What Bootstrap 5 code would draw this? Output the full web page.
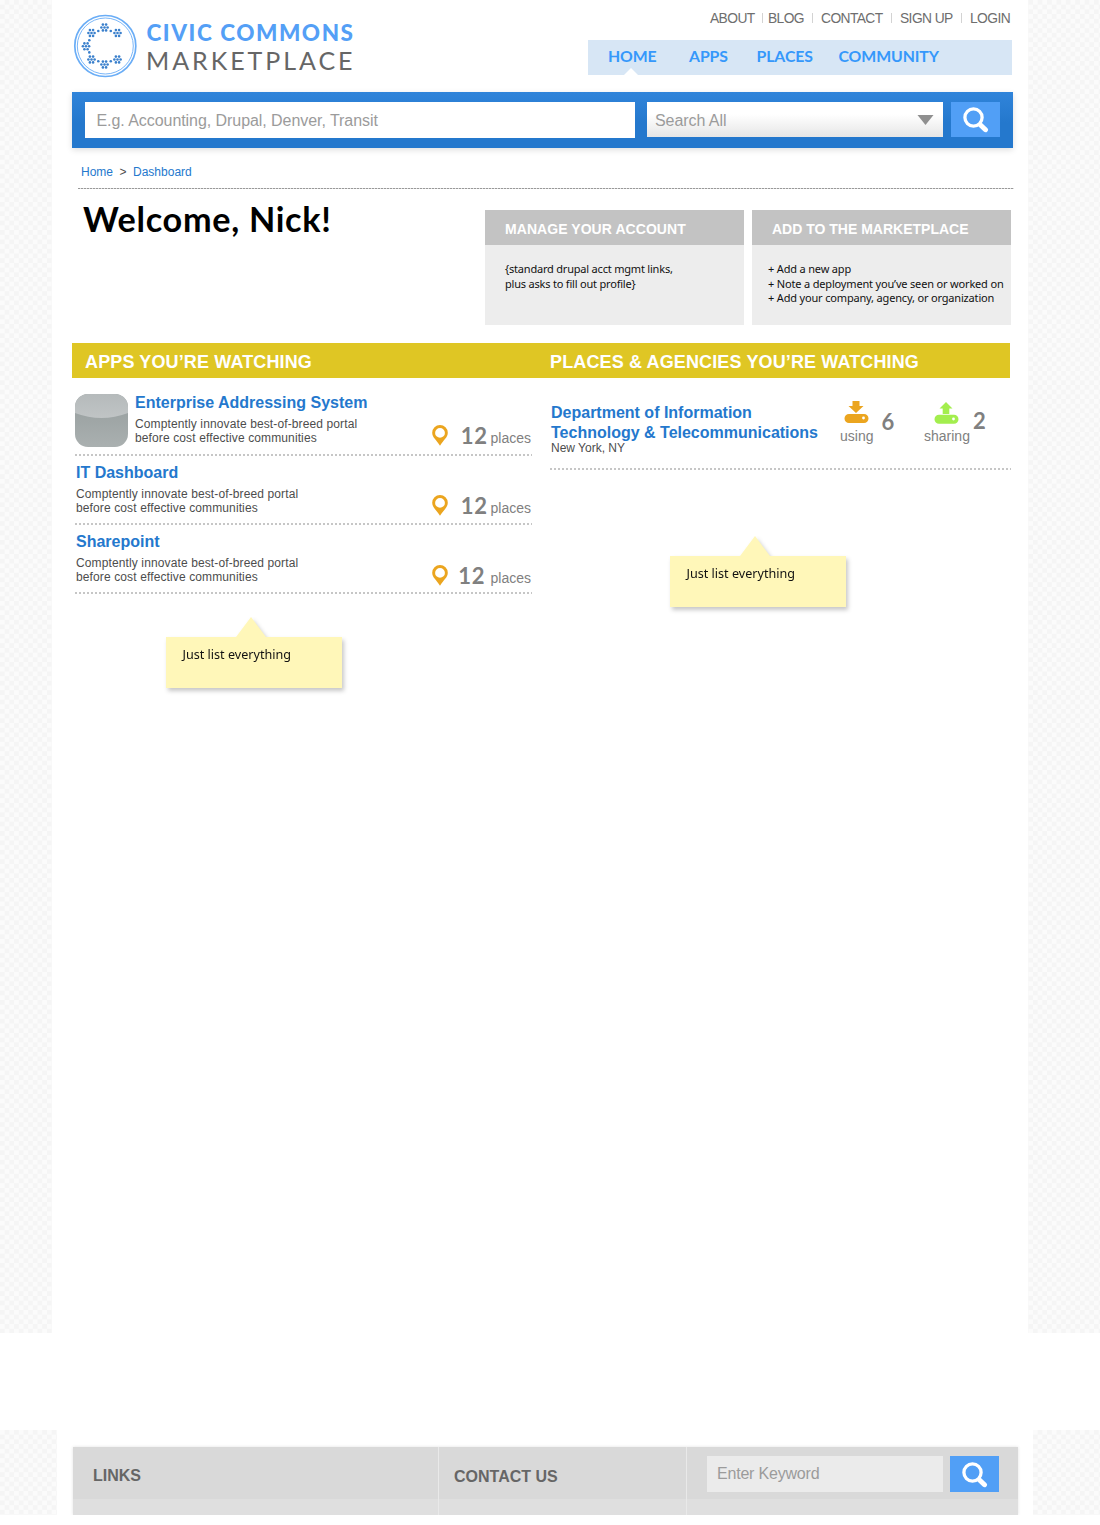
<!DOCTYPE html>
<html lang="en">
<head>
<meta charset="utf-8">
<meta name="viewport" content="width=device-width, initial-scale=1">
<title>Civic Commons Marketplace</title>
<link href="https://cdn.jsdelivr.net/npm/bootstrap@5.3.0/dist/css/bootstrap.min.css" rel="stylesheet">
<style>
  body { font-family: "Liberation Sans", Arial, sans-serif; font-size: 12px; color: #4d4d4d; background: #fff; width: 1100px; }
  a { text-decoration: none; }
  .checker { background: repeating-conic-gradient(#f5f5f5 0 25%, #fbfbfb 0 50%) 0 0 / 9.4px 9.4px; }
  .sheet { width: 976px; height: 1333px; margin-left: 52px; background: #fff; padding-left: 20px; }
  .inner { width: 940px; }
  .masthead { height: 92px; }
  .top-links { height: 40px; padding: 10px 0 0 122px; font-size: 13.8px; line-height: 17px; letter-spacing: -.58px; }
  .top-links a { color: #6e6e6e; white-space: nowrap; }
  .top-links a + a::before { content: ""; display: inline-block; width: 1px; height: 10px; background: #d3d3d3; margin-right: var(--gap, 8px); }
  .main-nav { width: 424px; height: 34.5px; background: #d7e6f5; font: 700 15.8px/32px Lato, sans-serif; letter-spacing: -.08px; padding-left: 20px; }
  .main-nav a { color: #3598fb; }
  .main-nav .active::after { content: ""; position: absolute; left: 16px; bottom: 0; border: 7px solid transparent; border-top: 0; border-bottom-color: #fff; }
  .search-bar { width: 940.5px; height: 56px; padding: 9.5px 0 0 12.5px; background: linear-gradient(#3084da, #2478cd 55%); box-shadow: 0 2px 6px rgba(0,0,0,.13); }
  .field { font-size: 16px; letter-spacing: -.06px; color: #9b9b9b; line-height: 37px; white-space: nowrap; }
  .field-main { width: 550px; height: 36.5px; background: #fff; padding-left: 12px; }
  .field-select { width: 296px; height: 35.5px; margin-left: 12.5px; padding: 2px 9px 0 8px; background: linear-gradient(#fff 35%, #e6e6e6); }
  .go { width: 49px; height: 35.5px; padding-top: 2px; background: #519ff6; }
  .crumbs { height: 40px; padding: 15px 0 0 9px; line-height: 18px; }
  .crumbs a, .entry a { color: #2478cd; }
  .rule-fine { height: 1px; width: 936px; margin-left: 6px; background: repeating-linear-gradient(90deg, #999 0 2px, #dedede 2px 3px); }
  .welcome { font: 700 34.2px/44px Lato, sans-serif; color: #000; margin: 8px 0 0 11px; letter-spacing: .7px; white-space: nowrap; }
  .panel { width: 259px; height: 115px; background: #ededed; }
  .panel h2 { height: 35px; margin: 0; padding: 2px 0 0 20px; background: #c3c3c3; color: #fff; font-size: 14px; font-weight: 700; line-height: 35px; letter-spacing: .06px; }
  .hand { font-family: "Noto Sans", sans-serif; color: #111; }
  .panel .hand { font-size: 11px; line-height: 14.5px; letter-spacing: -.17px; padding: 17px 0 0 20px; margin: 0; white-space: nowrap; }
  .gold { width: 938px; height: 35px; background: #dfc624; color: #fff; }
  .gold h2 { font-size: 18px; font-weight: 700; line-height: 38px; margin: 0; letter-spacing: .13px; }
  .dots { height: 2px; background: repeating-linear-gradient(90deg, #c6c6c6 0 2px, #fff 2px 4px); }
  .entry h3 { font-size: 16px; font-weight: 700; line-height: 20px; margin: 0; white-space: nowrap; }
  .entry p { line-height: 14.5px; letter-spacing: .12px; margin: 4px 0 0; white-space: nowrap; }
  .entry { height: 67px; padding-top: 6.5px; }
  .entry-first { height: 76px; padding-top: 14.5px; }
  .count { font: 700 22px/22px Lato, sans-serif; color: #808080; letter-spacing: .6px; }
  .places-count { line-height: 20px; }
  .unit { font-size: 14px; line-height: 16px; color: #808080; }
  .sticky-tip { width: 176px; height: 51px; background: #fff7b9; font-size: 12.6px; line-height: 18px; padding: 9px 0 0 16.5px; filter: drop-shadow(2px 3px 2px rgba(0,0,0,.22)); }
  .sticky-tip::before { content: ""; position: absolute; left: 69.5px; top: -20px; border: 15.5px solid transparent; border-top: 0; border-bottom: 20.5px solid #fff7b9; }
  .foot-zone { height: 85px; margin-top: 97px; padding-left: 57px; }
  .foot-sheet { width: 976px; height: 85px; background: #fff; padding: 17px 0 0 16px; }
  .foot { width: 945px; height: 68px; background: linear-gradient(#d9d9d9 52px, #dfdfdf 52px); box-shadow: 0 0 3px rgba(0,0,0,.12); }
  .foot h2 { font-size: 16px; font-weight: 700; color: #666; line-height: 20px; margin: 0; }
  .foot-col + .foot-col { border-left: 1px solid #e9e9e9; }
  .field-foot { width: 236px; height: 36px; background: #ebebeb; padding-left: 10px; letter-spacing: -.2px; line-height: 36px; }
</style>
</head>
<body>
<svg width="0" height="0" class="position-absolute">
  <defs>
    <symbol id="glass" viewBox="0 0 26 26"><circle cx="10.5" cy="10.5" r="8.6" fill="none" stroke="#fff" stroke-width="3.3"/><path d="M17.5 18l5 4.700" stroke="#fff" stroke-width="5" stroke-linecap="round"/></symbol>
    <symbol id="pin" viewBox="0 0 16 21"><path fill="#eba51f" fill-rule="evenodd" d="M8 0a7.800 7.800 0 0 1 7.800 7.800C15.800 12.500 11.500 15 8 20.800 4.500 15 .2 12.500 .2 7.800A7.800 7.800 0 0 1 8 0zM8 3a4.900 4.900 0 1 0 0 9.800A4.900 4.900 0 0 0 8 3z"/></symbol>
    <g id="cluster"><circle r="1.300"/><circle cx="3.100" r="1.300"/><circle cx="-3.100" r="1.300"/><circle cx="1.600" cy="2.900" r="1.300"/><circle cx="-1.600" cy="2.900" r="1.300"/><circle cx="1.600" cy="-2.900" r="1.300"/><circle cx="-1.600" cy="-2.900" r="1.300"/></g>
  </defs>
</svg>

<div class="checker">
  <div class="sheet">
    <div class="inner">
      <header class="masthead d-flex justify-content-between">
        <svg width="290" height="90" viewBox="72 0 290 90" role="img" aria-label="Civic Commons Marketplace">
          <g fill="none" stroke="#6aadf6"><circle cx="105.300" cy="46" r="30.500" stroke-width="1.700"/><circle cx="105.300" cy="46" r="28" stroke-width=".9"/></g>
          <g fill="#3b80cc">
            <use href="#cluster" x="104.500" y="27.500"/><use href="#cluster" x="91.500" y="33" /><use href="#cluster" x="117.500" y="33"/>
            <use href="#cluster" x="86" y="46.300"/><use href="#cluster" x="91.500" y="59.500"/><use href="#cluster" x="117.500" y="59.500"/><use href="#cluster" x="104.500" y="64.500"/>
            <circle cx="98.300" cy="31" r="1.300"/><circle cx="110.800" cy="31" r="1.300"/><circle cx="89.300" cy="40.200" r="1.300"/><circle cx="89.300" cy="52.400" r="1.300"/><circle cx="98.300" cy="61.300" r="1.300"/><circle cx="110.800" cy="61.300" r="1.300"/>
          </g>
          <g font-family="Lato, sans-serif">
            <text x="146.500" y="41" font-size="22.500" font-weight="900" fill="#549ff6" textLength="206.500">CIVIC COMMONS</text>
            <text x="146" y="69.700" font-size="25" fill="#666" textLength="206.500">MARKETPLACE</text>
          </g>
        </svg>
        <div>
          <div class="top-links d-flex">
            <a href="#" style="width:52px">ABOUT</a>
            <a href="#" style="width:50px;--gap:5px">BLOG</a>
            <a href="#" style="width:79px">CONTACT</a>
            <a href="#" style="width:70px">SIGN UP</a>
            <a href="#">LOGIN</a>
          </div>
          <nav class="main-nav d-flex">
            <a href="#" class="active position-relative" style="width:81px">HOME</a>
            <a href="#" style="width:67.500px">APPS</a>
            <a href="#" style="width:82px">PLACES</a>
            <a href="#">COMMUNITY</a>
          </nav>
        </div>
      </header>

      <form class="search-bar d-flex align-items-start">
        <div class="field field-main">E.g. Accounting, Drupal, Denver, Transit</div>
        <div class="field field-select d-flex justify-content-between align-items-center"><span>Search All</span>
          <svg width="17" height="10" viewBox="0 0 17 10"><path d="M.5 0h16L8.500 10z" fill="#8f8f8f"/></svg></div>
        <a href="#" class="go ms-2 d-flex align-items-center justify-content-center" aria-label="Search"><svg width="26" height="26"><use href="#glass"/></svg></a>
      </form>

      <nav class="crumbs"><a href="#">Home</a><span style="margin:0 6.500px 0 6.500px">&gt;</span><a href="#">Dashboard</a></nav>
      <div class="rule-fine"></div>

      <section class="d-flex justify-content-between" style="height:154px">
        <h1 class="welcome">Welcome, Nick!</h1>
        <div class="d-flex" style="gap:8px;padding:21px 1px 0 0">
          <div class="panel"><h2>MANAGE YOUR ACCOUNT</h2>
            <p class="hand" style="letter-spacing:-.2px">{standard drupal acct mgmt links,<br>plus asks to fill out profile}</p></div>
          <div class="panel"><h2 style="letter-spacing:0">ADD TO THE MARKETPLACE</h2>
            <p class="hand" style="padding-left:16px">+ Add a new app<br>+ Note a deployment you’ve seen or worked on<br>+ Add your company, agency, or organization</p></div>
        </div>
      </section>

      <div class="gold d-flex"><h2 style="width:478px;padding-left:13px">APPS YOU’RE WATCHING</h2><h2>PLACES &amp; AGENCIES YOU’RE WATCHING</h2></div>

      <div class="d-flex">
        <section style="width:460px;padding-left:3px">
          <div class="entry entry-first d-flex">
            <svg width="53" height="53" viewBox="0 0 53 53" style="margin:1.500px 7px 0 0" class="flex-shrink-0">
              <defs><clipPath id="tile"><rect width="53" height="53" rx="13"/></clipPath><linearGradient id="steel" x2="0" y2="1"><stop offset=".4" stop-color="#9da4a4"/><stop offset="1" stop-color="#aab0b0"/></linearGradient><linearGradient id="shine" x2="0" y2="1"><stop stop-color="#b5babb"/><stop offset="1" stop-color="#c0c4c5"/></linearGradient></defs>
              <g clip-path="url(#tile)"><rect width="53" height="53" fill="url(#steel)"/><path d="M0 0h53v19Q26.500 29 0 19z" fill="url(#shine)"/></g>
            </svg>
            <div class="flex-grow-1"><h3><a href="#">Enterprise Addressing System</a></h3><p>Comptently innovate best-of-breed portal<br>before cost effective communities</p></div>
            <div class="d-flex align-items-end align-self-end" style="margin:0 1px 8px 0"><svg width="16" height="21" style="margin-right:12.500px"><use href="#pin"/></svg><span class="count places-count">12</span><span class="unit" style="margin-left:3px">places</span></div>
          </div>
          <div class="dots"></div>
          <div class="entry d-flex">
            <div class="flex-grow-1" style="padding-left:1px"><h3><a href="#">IT Dashboard</a></h3><p>Comptently innovate best-of-breed portal<br>before cost effective communities</p></div>
            <div class="d-flex align-items-end align-self-end" style="margin:0 1px 7px 0"><svg width="16" height="21" style="margin-right:12.500px"><use href="#pin"/></svg><span class="count places-count">12</span><span class="unit" style="margin-left:3px">places</span></div>
          </div>
          <div class="dots"></div>
          <div class="entry d-flex">
            <div class="flex-grow-1" style="padding-left:1px"><h3><a href="#">Sharepoint</a></h3><p>Comptently innovate best-of-breed portal<br>before cost effective communities</p></div>
            <div class="d-flex align-items-end align-self-end" style="margin:0 1px 6px 0"><svg width="16" height="21" style="margin-right:10px"><use href="#pin"/></svg><span class="count places-count">12</span><span class="unit" style="margin-left:5.500px">places</span></div>
          </div>
          <div class="dots"></div>
          <div class="sticky-tip hand position-relative" style="margin:43px 0 0 91px">Just list everything</div>
        </section>

        <section style="width:461px;margin-left:18px">
          <div class="d-flex entry" style="height:90px;padding:25px 0 0 1px">
            <div style="width:289px"><h3 style="line-height:19.500px"><a href="#">Department of Information<br>Technology &amp; Telecommunications</a></h3><p style="margin-top:-1px;letter-spacing:0">New York, NY</p></div>
            <div class="d-flex" style="width:84px;margin-top:-2px">
              <div class="text-center">
                <svg width="25" height="22" viewBox="0 0 25 22" class="d-block mx-auto"><path fill="#eba51f" d="M8.500 0h7v5h4L12 12 4.500 5h4zM5 13h15a4.500 4.500 0 0 1 0 9H5a4.500 4.500 0 0 1 0-9z"/><circle cx="19.500" cy="17" r="1.400" fill="#fff"/></svg>
                <div class="unit" style="margin-top:5px">using</div></div>
              <span class="count" style="margin:10px 0 0 8px">6</span>
            </div>
            <div class="d-flex" style="margin-top:-1px">
              <div class="text-center">
                <svg width="25" height="22" viewBox="0 0 25 22" class="d-block mx-auto"><path fill="#a3ee4e" d="M12 0l6.500 6.500h-3.200V12H8.700V6.500H5.500zM5 12.800h15a4.500 4.500 0 0 1 0 9H5a4.500 4.500 0 0 1 0-9z"/><circle cx="19.500" cy="17" r="1.400" fill="#fff"/></svg>
                <div class="unit" style="margin-top:4px">sharing</div></div>
              <span class="count" style="margin:8px 0 0 3px">2</span>
            </div>
          </div>
          <div class="dots"></div>
          <div class="sticky-tip hand position-relative" style="margin:86px 0 0 120px">Just list everything</div>
        </section>
      </div>
    </div>
  </div>
</div>

<footer class="foot-zone checker">
  <div class="foot-sheet">
    <div class="foot d-flex">
      <div class="foot-col" style="width:364.500px;padding:19px 0 0 20px"><h2>LINKS</h2></div>
      <div class="foot-col" style="width:248.500px;padding:20px 0 0 15.500px"><h2>CONTACT US</h2></div>
      <div class="foot-col d-flex" style="padding:9px 0 0 20px"><div class="field field-foot">Enter Keyword</div>
        <a href="#" class="go d-flex align-items-center justify-content-center" style="margin-left:7px" aria-label="Search"><svg width="26" height="26"><use href="#glass"/></svg></a></div>
    </div>
  </div>
</footer>
<script src="https://cdn.jsdelivr.net/npm/bootstrap@5.3.0/dist/js/bootstrap.bundle.min.js"></script>
</body>
</html>
